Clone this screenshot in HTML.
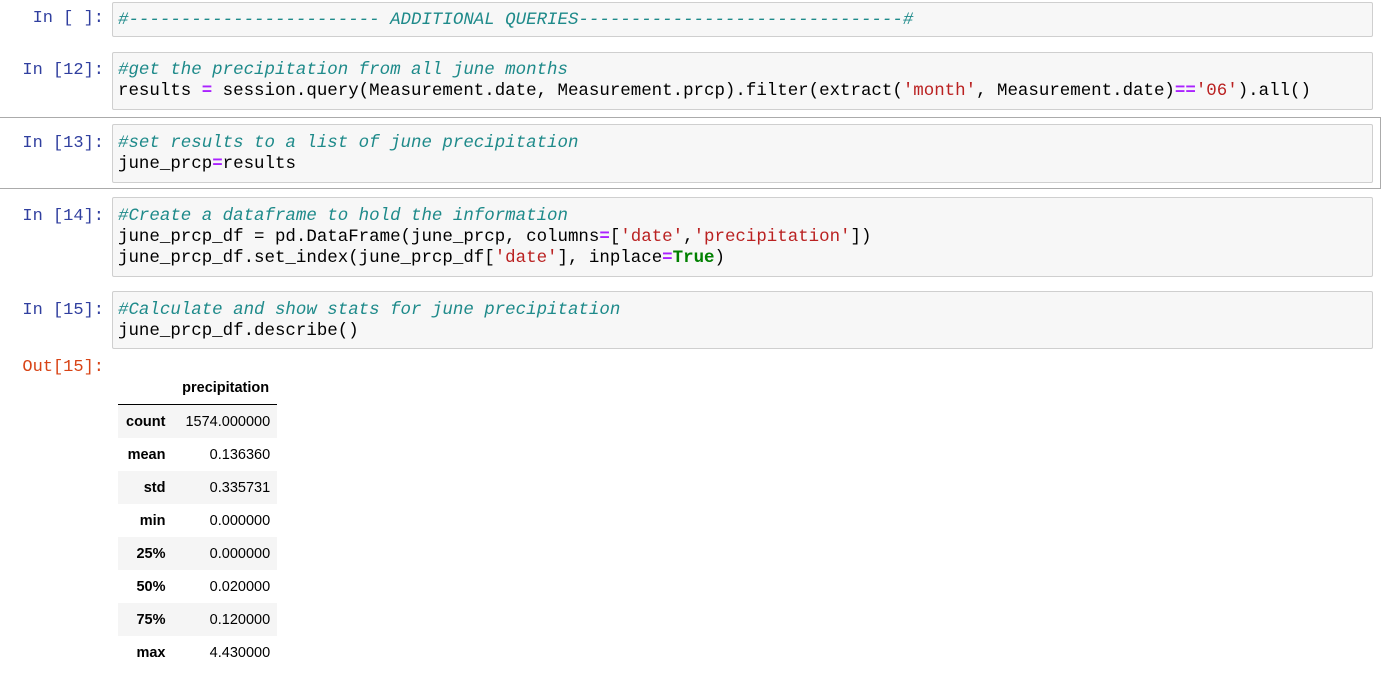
<!DOCTYPE html>
<html><head><style>
body{margin:0;width:1394px;height:687px;background:#fff;position:relative;overflow:hidden}
.p{position:absolute;font-family:"Liberation Mono",monospace;font-size:17px;color:#303F9F;text-align:right;width:104px;left:0;white-space:pre}
.o{color:#D84315}
.box{position:absolute;left:112px;width:1259px;background:#f7f7f7;border:1px solid #cfcfcf;border-radius:2px}
.code{position:absolute;left:118px;font-family:"Liberation Mono",monospace;font-size:17.45px;line-height:21px;color:#000;white-space:pre}
.c{color:#1E8A8A;font-style:italic}
.s{color:#BA2121}
.op{color:#AA22FF;font-weight:bold}
.k{color:#008000;font-weight:bold}
table{position:absolute;left:118px;top:372px;border-collapse:collapse;font-family:"Liberation Sans",Arial,sans-serif;font-size:14.5px;color:#000}
td,th{height:33px;padding:0 8px;text-align:right;vertical-align:middle}
td{padding-left:12px;padding-right:7px}
th{font-weight:bold}
thead th{border-bottom:1.5px solid #000;height:32px}
tbody tr:nth-child(odd){background:#f5f5f5}
</style></head><body>
<div class="p" style="top:9px">In [ ]:</div>
<div class="box" style="top:2px;height:33px"></div>
<div class="code" style="top:10px"><span class="c">#------------------------ ADDITIONAL QUERIES-------------------------------#</span></div>

<div class="p" style="top:61px">In [12]:</div>
<div class="box" style="top:52px;height:56px"></div>
<div class="code" style="top:60px"><span class="c">#get the precipitation from all june months</span>
results <span class="op">=</span> session.query(Measurement.date, Measurement.prcp).filter(extract(<span class="s">'month'</span>, Measurement.date)<span class="op">==</span><span class="s">'06'</span>).all()</div>

<div style="position:absolute;left:-2px;top:117px;width:1381px;height:70px;border:1px solid #ababab"></div>
<div class="p" style="top:134px">In [13]:</div>
<div class="box" style="top:124px;height:57px"></div>
<div class="code" style="top:133px"><span class="c">#set results to a list of june precipitation</span>
june_prcp<span class="op">=</span>results</div>

<div class="p" style="top:207px">In [14]:</div>
<div class="box" style="top:197px;height:78px"></div>
<div class="code" style="top:206px"><span class="c">#Create a dataframe to hold the information</span>
june_prcp_df = pd.DataFrame(june_prcp, columns<span class="op">=</span>[<span class="s">'date'</span>,<span class="s">'precipitation'</span>])
june_prcp_df.set_index(june_prcp_df[<span class="s">'date'</span>], inplace<span class="op">=</span><span class="k">True</span>)</div>

<div class="p" style="top:301px">In [15]:</div>
<div class="box" style="top:291px;height:56px"></div>
<div class="code" style="top:300px"><span class="c">#Calculate and show stats for june precipitation</span>
june_prcp_df.describe()</div>

<div class="p o" style="top:358px">Out[15]:</div>
<table>
<thead><tr><th style="width:32px"></th><th>precipitation</th></tr></thead>
<tbody>
<tr><th>count</th><td>1574.000000</td></tr>
<tr><th>mean</th><td>0.136360</td></tr>
<tr><th>std</th><td>0.335731</td></tr>
<tr><th>min</th><td>0.000000</td></tr>
<tr><th>25%</th><td>0.000000</td></tr>
<tr><th>50%</th><td>0.020000</td></tr>
<tr><th>75%</th><td>0.120000</td></tr>
<tr><th>max</th><td>4.430000</td></tr>
</tbody></table>
</body></html>
